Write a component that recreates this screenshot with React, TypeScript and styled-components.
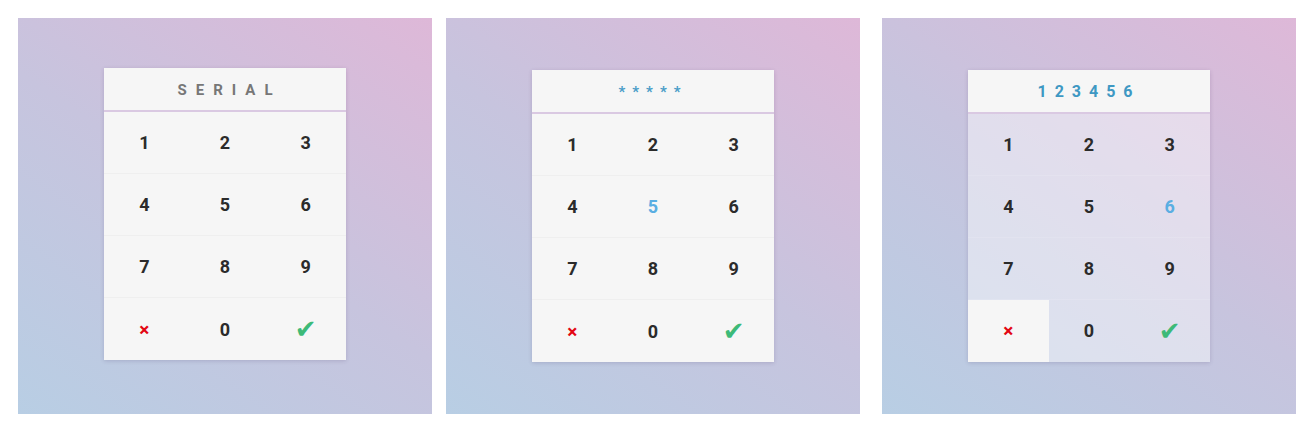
import React from "react";
import styled, { createGlobalStyle, css } from "styled-components";

const Global = createGlobalStyle`
  html, body { margin: 0; padding: 0; background: #ffffff; }
  body { font-family: Roboto, "Liberation Sans", sans-serif; }
`;

const Page = styled.div`
  display: flex;
  padding: 18px 0 0 18px;
`;

const Scene = styled.div<{ $offset: number }>`
  width: 414px;
  height: 396px;
  margin-left: ${(p) => p.$offset}px;
  background: linear-gradient(35deg, #b8cee4 0%, #c7c4de 50%, #deb8d8 100%);
  display: flex;
  align-items: center;
  justify-content: center;
`;

const Card = styled.div<{ $lift: number }>`
  width: 242px;
  display: flex;
  flex-direction: column;
  margin-top: ${(p) => -p.$lift}px;
  box-shadow: 0 1px 4px rgba(60, 40, 90, 0.18);
`;

const Header = styled.div`
  height: 44px;
  background: #f6f6f6;
  border-bottom: 2px solid #dac9e2;
  display: flex;
  align-items: center;
  justify-content: center;
  padding-top: 2px;
  box-sizing: border-box;
`;

const Title = styled.span`
  font-size: 15px;
  font-weight: 700;
  color: #777777;
  letter-spacing: 9px;
  margin-right: -9px;
`;

const Masked = styled.span`
  font-size: 15px;
  font-weight: 700;
  color: #4a9dc8;
  letter-spacing: 7px;
`;

const Entered = styled.span`
  font-size: 16px;
  font-weight: 700;
  color: #3e98c3;
  letter-spacing: 8px;
`;

const Pad = styled.div<{ $glass: boolean }>`
  display: grid;
  grid-template-columns: repeat(3, 1fr);
  background: ${(p) => (p.$glass ? "rgba(255,255,255,0.45)" : "#f6f6f6")};
`;

const Key = styled.div<{ $solid?: boolean; $glass: boolean; $last: boolean }>`
  height: 62px;
  display: flex;
  align-items: center;
  justify-content: center;
  font-size: 18px;
  font-weight: 700;
  color: #2b2b2b;
  box-sizing: border-box;
  ${(p) =>
    !p.$last &&
    css`
      border-bottom: 1px solid ${p.$glass ? "rgba(255,255,255,0.12)" : "#efefef"};
    `}
  ${(p) =>
    p.$solid &&
    css`
      background: #f6f6f6;
    `}
`;

const Digit = styled.span<{ $active?: boolean }>`
  color: ${(p) => (p.$active ? "#5aaee2" : "#2b2b2b")};
`;

const Cancel = styled.span`
  color: #e30613;
  font-size: 19px;
  font-weight: 700;
  line-height: 1;
`;

const Confirm = styled.span`
  color: #3dba78;
  font-family: "DejaVu Sans", sans-serif;
  font-size: 26px;
  line-height: 1;
`;

type Variant = "serial" | "masked" | "entered";

const keys = ["1", "2", "3", "4", "5", "6", "7", "8", "9", "x", "0", "ok"];

function Keypad({ variant }: { variant: Variant }) {
  const glass = variant === "entered";
  const active = variant === "masked" ? "5" : variant === "entered" ? "6" : "";
  return (
    <Pad $glass={glass}>
      {keys.map((k, i) => (
        <Key
          key={k}
          $glass={glass}
          $last={i >= 9}
          $solid={glass && k === "x"}
        >
          {k === "x" ? (
            <Cancel>×</Cancel>
          ) : k === "ok" ? (
            <Confirm>✔</Confirm>
          ) : (
            <Digit $active={k === active}>{k}</Digit>
          )}
        </Key>
      ))}
    </Pad>
  );
}

function Panel({ variant, offset, lift }: { variant: Variant; offset: number; lift: number }) {
  return (
    <Scene $offset={offset}>
      <Card $lift={lift}>
        <Header>
          {variant === "serial" && <Title>SERIAL</Title>}
          {variant === "masked" && <Masked>*****</Masked>}
          {variant === "entered" && <Entered>123456</Entered>}
        </Header>
        <Keypad variant={variant} />
      </Card>
    </Scene>
  );
}

export default function App() {
  return (
    <>
      <Global />
      <Page>
        <Panel variant="serial" offset={0} lift={4} />
        <Panel variant="masked" offset={14} lift={0} />
        <Panel variant="entered" offset={22} lift={1} />
      </Page>
    </>
  );
}
